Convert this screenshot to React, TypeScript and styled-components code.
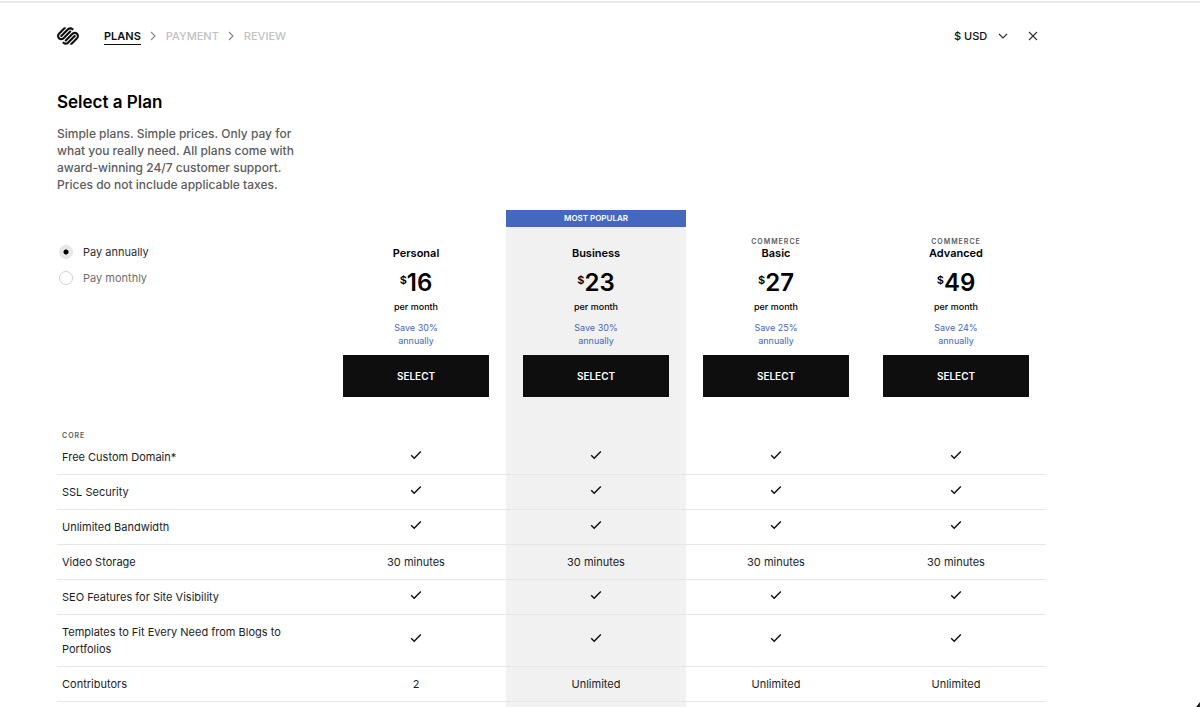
import React, { useState } from "react";
import styled, { createGlobalStyle } from "styled-components";
import { SiSquarespace } from "react-icons/si";

const GlobalStyle = createGlobalStyle`
  *, *::before, *::after { box-sizing: border-box; }
  body {
    margin: 0;
    background: #fff;
    color: #1c1c1c;
    font-family: Inter, "Liberation Sans", sans-serif;
    font-size: 11px;
    line-height: 17px;
  }
`;

const Page = styled.div`
  padding: 1px 0 0;
`;

const TopRule = styled.div`
  height: 2px;
  background: #e9ebea;
`;

const Header = styled.header`
  display: flex;
  align-items: center;
  height: 66px;
  padding: 0 162px 0 57px;
`;

const HomeLink = styled.a`
  display: flex;
  margin-right: 25px;
  color: #0e0e0e;
`;

const Steps = styled.ol`
  display: flex;
  align-items: center;
  gap: 9px;
  margin: 0;
  padding: 0;
  list-style: none;
`;

const Step = styled.li`
  display: flex;
  align-items: center;
  gap: 10px;
`;

const StepLink = styled.a<{ $current?: boolean }>`
  padding-top: 1px;
  font-weight: ${(p) => (p.$current ? 600 : 500)};
  line-height: 15px;
  text-decoration: none;
  color: ${(p) => (p.$current ? "#0e0e0e" : "#c2c2c2")};
  border-bottom: 1px solid ${(p) => (p.$current ? "#0e0e0e" : "transparent")};
`;

const Actions = styled.div`
  display: flex;
  align-items: center;
  gap: 20px;
  margin-left: auto;
`;

const CurrencyField = styled.label`
  display: grid;
  align-items: center;

  & > * { grid-area: 1 / 1; }
  & > svg { justify-self: end; pointer-events: none; }
`;

const CurrencySelect = styled.select`
  appearance: none;
  width: 54px;
  padding: 0;
  border: 0;
  background: none;
  color: #0e0e0e;
  font: 500 11px/17px Inter, "Liberation Sans", sans-serif;
`;

const CloseButton = styled.button`
  display: flex;
  padding: 0;
  border: 0;
  background: none;
`;

const Main = styled.main`
  padding: 22px 154px 0 57px;
`;

const Title = styled.h1`
  margin: 0 0 12px;
  color: #000;
  font-size: 17px;
  line-height: 22px;
  font-weight: 600;
`;

const Intro = styled.p`
  width: 250px;
  margin: 0 0 17px;
  font-size: 12px;
  font-weight: 500;
  color: #5c5c5c;
`;

const PlanTable = styled.table`
  width: 100%;
  table-layout: fixed;
  border-spacing: 0;
`;

const FeatureCol = styled.col`
  width: 269px;
`;

const BillingCell = styled.td`
  padding: 29px 0 0 2px;
  vertical-align: top;
`;

const BillingOptions = styled.fieldset`
  margin: 0;
  padding: 0;
  border: 0;
`;

const BillingOption = styled.label<{ $active: boolean }>`
  display: flex;
  align-items: center;
  gap: 10px;
  height: 26px;
  color: ${(p) => (p.$active ? "#2e2e2e" : "#6e6e6e")};
`;

const Radio = styled.input`
  appearance: none;
  width: 14px;
  height: 14px;
  margin: 0;
  border: 1px solid #d0d0d0;
  border-radius: 50%;

  &:checked {
    border-color: #e4e4e4;
    background: radial-gradient(circle, #000 2px, #e8e8e8 3px);
  }
`;

const PlanHead = styled.th<{ $popular?: boolean }>`
  padding: 0 0 29px;
  vertical-align: top;
  color: #000;
  font-weight: 400;
  background: ${(p) => (p.$popular ? "#f1f1f1" : "transparent")};
`;

const Banner = styled.div<{ $popular?: boolean }>`
  height: 17px;
  margin-bottom: 9px;
  background: ${(p) => (p.$popular ? "#4468bd" : "transparent")};
  color: #fff;
  font-size: 8px;
  font-weight: 600;
`;

const Caps = styled.div`
  height: 10px;
  font-size: 7px;
  line-height: 12px;
  font-weight: 600;
  letter-spacing: 1px;
  color: #5c5c5c;
`;

const PlanName = styled.div`
  font-weight: 600;
  line-height: 14px;
`;

const Price = styled.div`
  display: flex;
  justify-content: center;
  margin: 9px 0 4px;
  font-size: 24px;
  line-height: 28px;
  font-weight: 600;
`;

const Currency = styled.span`
  padding-top: 4px;
  font-size: 11px;
  line-height: 14px;
`;

const Period = styled.div`
  font-size: 9px;
  line-height: 12px;
  font-weight: 500;
  margin-bottom: 8px;
`;

const Saving = styled.div`
  width: 60px;
  margin: 0 auto 8px;
  color: #4468bd;
  font-size: 9px;
  line-height: 13px;
`;

const SelectButton = styled.button`
  display: block;
  width: calc(100% - 34px);
  height: 42px;
  margin: 0 auto;
  padding: 0;
  border: 0;
  background: #0e0e0e;
  color: #fff;
  font: 600 10px/12px Inter, "Liberation Sans", sans-serif;
`;

const GroupHead = styled.th`
  height: 13px;
  padding: 4px 5px 0;
  text-align: left;
`;

const FeatureName = styled.th`
  padding: 9px 40px 8px 5px;
  border-bottom: 1px solid #e6e6e6;
  text-align: left;
  font-weight: 400;
`;

const Value = styled.td<{ $popular?: boolean; $rule?: boolean }>`
  padding: 0;
  text-align: center;
  border-bottom: ${(p) => (p.$rule ? "1px solid #e6e6e6" : "0")};
  background: ${(p) => (p.$popular ? "#f1f1f1" : "transparent")};
`;

const CheckIcon = styled.svg`
  display: block;
  margin: 0 auto 5px;
`;

const TableEnd = styled.td`
  height: 6px;
  padding: 0;
`;

const Corner = styled.svg`
  position: fixed;
  right: 0;
  bottom: 0;
`;

const Chevron = () => (
  <svg width="6" height="10" viewBox="0 0 6 10" fill="none" stroke="#8a8a8a" strokeWidth="1.2" aria-hidden="true">
    <path d="M1 1l4 4-4 4" />
  </svg>
);

const Check = () => (
  <CheckIcon width="12" height="10" viewBox="0 0 12 10" fill="none" stroke="#0e0e0e" strokeWidth="1.4" role="img" aria-label="Included">
    <path d="M1.2 5.2L4.2 8.2L10.8 1.4" />
  </CheckIcon>
);

const plans = [
  { group: "", name: "Personal", price: 16, saving: 30 },
  { group: "", name: "Business", price: 23, saving: 30, popular: true },
  { group: "COMMERCE", name: "Basic", price: 27, saving: 25 },
  { group: "COMMERCE", name: "Advanced", price: 49, saving: 24 },
];

const all = (v: string | true) => [v, v, v, v];

const features: { name: string; values: (string | true)[] }[] = [
  { name: "Free Custom Domain*", values: all(true) },
  { name: "SSL Security", values: all(true) },
  { name: "Unlimited Bandwidth", values: all(true) },
  { name: "Video Storage", values: all("30 minutes") },
  { name: "SEO Features for Site Visibility", values: all(true) },
  { name: "Templates to Fit Every Need from Blogs to Portfolios", values: all(true) },
  { name: "Contributors", values: ["2", "Unlimited", "Unlimited", "Unlimited"] },
];

export default function App() {
  const [billing, setBilling] = useState("annually");

  return (
    <Page>
      <GlobalStyle />
      <TopRule />
      <Header>
        <HomeLink href="#" aria-label="Home">
          <SiSquarespace size={22} />
        </HomeLink>
        <nav aria-label="Checkout">
          <Steps>
            <Step>
              <StepLink href="#plans" $current aria-current="step">PLANS</StepLink>
            </Step>
            <Step>
              <Chevron />
              <StepLink href="#payment">PAYMENT</StepLink>
            </Step>
            <Step>
              <Chevron />
              <StepLink href="#review">REVIEW</StepLink>
            </Step>
          </Steps>
        </nav>
        <Actions>
          <CurrencyField>
            <CurrencySelect aria-label="Currency" defaultValue="USD">
              <option value="USD">$ USD</option>
            </CurrencySelect>
            <svg width="10" height="6" viewBox="0 0 10 6" fill="none" stroke="#333" strokeWidth="1.2" aria-hidden="true">
              <path d="M1 1l4 4 4-4" />
            </svg>
          </CurrencyField>
          <CloseButton aria-label="Close">
            <svg width="10" height="10" viewBox="0 0 10 10" fill="none" stroke="#333" strokeWidth="1.1">
              <path d="M1 1l8 8M9 1l-8 8" />
            </svg>
          </CloseButton>
        </Actions>
      </Header>

      <Main>
        <Title>Select a Plan</Title>
        <Intro>
          Simple plans. Simple prices. Only pay for what you really need. All plans come with
          award-winning 24/7 customer support. Prices do not include applicable taxes.
        </Intro>

        <PlanTable>
          <colgroup>
            <FeatureCol />
            {plans.map((p) => <col key={p.name} />)}
          </colgroup>
          <thead>
            <tr>
              <BillingCell>
                <BillingOptions aria-label="Billing period">
                  {["annually", "monthly"].map((option) => (
                    <BillingOption key={option} $active={billing === option}>
                      <Radio
                        type="radio"
                        name="billing"
                        checked={billing === option}
                        onChange={() => setBilling(option)}
                      />
                      {`Pay ${option}`}
                    </BillingOption>
                  ))}
                </BillingOptions>
              </BillingCell>
              {plans.map((p) => (
                <PlanHead key={p.name} scope="col" $popular={p.popular}>
                  <Banner $popular={p.popular}>{p.popular && "MOST POPULAR"}</Banner>
                  <Caps>{p.group}</Caps>
                  <PlanName>{p.name}</PlanName>
                  <Price>
                    <Currency>$</Currency>
                    {p.price}
                  </Price>
                  <Period>per month</Period>
                  <Saving>{`Save ${p.saving}% annually`}</Saving>
                  <SelectButton>SELECT</SelectButton>
                </PlanHead>
              ))}
            </tr>
          </thead>
          <tbody>
            <tr>
              <GroupHead scope="rowgroup">
                <Caps>CORE</Caps>
              </GroupHead>
              {plans.map((p) => <Value key={p.name} $popular={p.popular} />)}
            </tr>
            {features.map((f) => (
              <tr key={f.name}>
                <FeatureName scope="row">{f.name}</FeatureName>
                {f.values.map((v, i) => (
                  <Value key={plans[i].name} $popular={plans[i].popular} $rule>
                    {v === true ? <Check /> : v}
                  </Value>
                ))}
              </tr>
            ))}
            <tr>
              <TableEnd />
              {plans.map((p) => <Value key={p.name} $popular={p.popular} />)}
            </tr>
          </tbody>
        </PlanTable>
      </Main>
      <Corner width="4" height="5" viewBox="0 0 4 5" aria-hidden="true">
        <path d="M4 0v5H0z" fill="#222" />
      </Corner>
    </Page>
  );
}
